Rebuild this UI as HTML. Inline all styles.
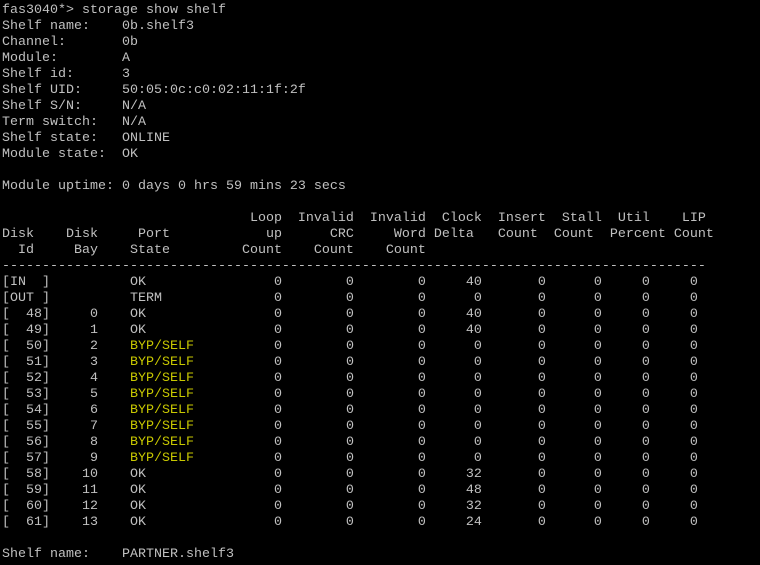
<!DOCTYPE html>
<html><head><meta charset="utf-8"><style>
html,body{margin:0;padding:0;background:#000;width:760px;height:565px;overflow:hidden}
pre{margin:0;padding:3px 0 0 2px;font-family:"Liberation Mono",monospace;font-size:13.33px;line-height:16px;color:#c0c0c0;}
.y{color:#c8c800}
</style></head><body><pre>fas3040*&gt; storage show shelf
Shelf name:    0b.shelf3
Channel:       0b
Module:        A
Shelf id:      3
Shelf UID:     50:05:0c:c0:02:11:1f:2f
Shelf S/N:     N/A
Term switch:   N/A
Shelf state:   ONLINE
Module state:  OK

Module uptime: 0 days 0 hrs 59 mins 23 secs

                               Loop  Invalid  Invalid  Clock  Insert  Stall  Util    LIP
Disk    Disk     Port            up      CRC     Word Delta   Count  Count  Percent Count
  Id     Bay    State         Count    Count    Count
----------------------------------------------------------------------------------------
[IN  ]          OK                0        0        0     40       0      0     0     0
[OUT ]          TERM              0        0        0      0       0      0     0     0
[  48]     0    OK                0        0        0     40       0      0     0     0
[  49]     1    OK                0        0        0     40       0      0     0     0
[  50]     2    <span class="y">BYP/SELF</span>          0        0        0      0       0      0     0     0
[  51]     3    <span class="y">BYP/SELF</span>          0        0        0      0       0      0     0     0
[  52]     4    <span class="y">BYP/SELF</span>          0        0        0      0       0      0     0     0
[  53]     5    <span class="y">BYP/SELF</span>          0        0        0      0       0      0     0     0
[  54]     6    <span class="y">BYP/SELF</span>          0        0        0      0       0      0     0     0
[  55]     7    <span class="y">BYP/SELF</span>          0        0        0      0       0      0     0     0
[  56]     8    <span class="y">BYP/SELF</span>          0        0        0      0       0      0     0     0
[  57]     9    <span class="y">BYP/SELF</span>          0        0        0      0       0      0     0     0
[  58]    10    OK                0        0        0     32       0      0     0     0
[  59]    11    OK                0        0        0     48       0      0     0     0
[  60]    12    OK                0        0        0     32       0      0     0     0
[  61]    13    OK                0        0        0     24       0      0     0     0

Shelf name:    PARTNER.shelf3
</pre></body></html>
